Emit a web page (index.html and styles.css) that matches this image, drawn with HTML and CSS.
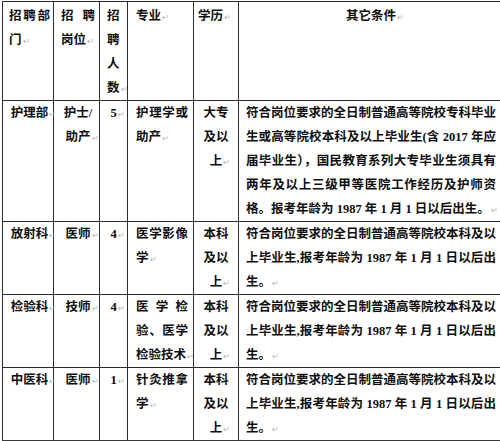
FILE: index.html
```html
<!DOCTYPE html>
<html lang="zh-CN">
<head>
<meta charset="utf-8">
<title>招聘岗位</title>
<link rel="stylesheet" href="styles.css">
</head>
<body>
<div class="page">
<table class="jobs">
<colgroup>
<col class="c1"><col class="c2"><col class="c3"><col class="c4"><col class="c5"><col class="c6">
</colgroup>
<tr class="head">
<td class="k1"><span class="j">招聘部</span>门<span class="pm">↵</span></td>
<td class="k2 left"><span class="j">招聘</span>岗位<span class="pm">↵</span></td>
<td class="k3 left">招<br>聘<br>人<br>数<span class="pm">↵</span></td>
<td class="k4">专业<span class="pm">↵</span></td>
<td class="k5 left">学历<span class="pm">↵</span></td>
<td class="k6 center">其它条件<span class="pm">↵</span></td>
</tr>
<tr>
<td class="k1 center">护理部<span class="pm">↵</span></td>
<td class="k2 center">护士/<br>助产<span class="pm">↵</span></td>
<td class="k3 num">5<span class="pm">↵</span></td>
<td class="k4"><span class="j">护理学或</span>助产<span class="pm">↵</span></td>
<td class="k5 center">大专<br>及以<br>上<span class="pm">↵</span></td>
<td class="k6"><span class="j">符合岗位要求的全日制普通高等院校专科毕业</span><span class="j">生或高等院校本科及以上毕业生(含 2017 年应</span><span class="j">届毕业生），国民教育系列大专毕业生须具有</span><span class="j">两年及以上三级甲等医院工作经历及护师资</span>格。报考年龄为 1987 年 1 月 1 日以后出生。<span class="pm">↵</span></td>
</tr>
<tr>
<td class="k1 center">放射科<span class="pm">↵</span></td>
<td class="k2 center">医师<span class="pm">↵</span></td>
<td class="k3 num">4<span class="pm">↵</span></td>
<td class="k4"><span class="j">医学影像</span>学<span class="pm">↵</span></td>
<td class="k5 center">本科<br>及以<br>上<span class="pm">↵</span></td>
<td class="k6"><span class="j">符合岗位要求的全日制普通高等院校本科及以</span><span class="j">上毕业生,报考年龄为 1987 年 1 月 1 日以后出</span>生。<span class="pm">↵</span></td>
</tr>
<tr>
<td class="k1 center">检验科<span class="pm">↵</span></td>
<td class="k2 center">技师<span class="pm">↵</span></td>
<td class="k3 num">4<span class="pm">↵</span></td>
<td class="k4"><span class="j">医学检</span><span class="j">验、医学</span>检验技术<span class="pm">↵</span></td>
<td class="k5 center">本科<br>及以<br>上<span class="pm">↵</span></td>
<td class="k6"><span class="j">符合岗位要求的全日制普通高等院校本科及以</span><span class="j">上毕业生,报考年龄为 1987 年 1 月 1 日以后出</span>生。<span class="pm">↵</span></td>
</tr>
<tr class="last">
<td class="k1 center">中医科<span class="pm">↵</span></td>
<td class="k2 center">医师<span class="pm">↵</span></td>
<td class="k3 num">1<span class="pm">↵</span></td>
<td class="k4"><span class="j">针灸推拿</span>学<span class="pm">↵</span></td>
<td class="k5 center">本科<br>及以<br>上<span class="pm">↵</span></td>
<td class="k6"><span class="j">符合岗位要求的全日制普通高等院校本科及以</span><span class="j">上毕业生,报考年龄为 1987 年 1 月 1 日以后出</span>生。<span class="pm">↵</span></td>
</tr>
</table>
</div>
</body>
</html>
```

FILE: styles.css
```css
html, body {
  margin: 0;
  padding: 0;
  background: #ffffff;
}

.page {
  padding: 1px 0 0 2px;
}

.jobs {
  border-collapse: collapse;
  table-layout: fixed;
  width: 498px;
  font-family: "Liberation Serif", "Noto Sans CJK SC", serif;
  font-size: 12.5px;
  font-weight: 700;
  color: #0e0e0e;
  line-height: 24px;
}

.c1 { width: 51px; }
.c2 { width: 46px; }
.c3 { width: 28px; }
.c4 { width: 66px; }
.c5 { width: 45px; }
.c6 { width: 262px; }

.jobs td {
  border: 1px solid #2c2c2c;
  vertical-align: top;
  padding: 0;
  text-align: left;
  overflow: visible;
}

.jobs .head td {
  padding-top: 2px;
}

.jobs td.k6 {
  border-right-color: #6a6a6a;
}

.jobs .last td {
  border-bottom-color: #3a3a3a;
}

.k1 { padding-left: 6px !important; padding-right: 3px !important; }
.k2 { padding-left: 7px !important; padding-right: 4px !important; }
.k3 { padding-left: 7px !important; padding-right: 3px !important; }
.k4 { padding-left: 8px !important; padding-right: 5px !important; }
.k5 { padding-left: 4px !important; padding-right: 4px !important; }
.k6 { padding-left: 7px !important; padding-right: 4px !important; }

.jobs td.k3.num {
  padding-left: 4px !important;
  padding-right: 4px !important;
  text-align: center;
}

.jobs td.center { text-align: center; }
.jobs td.left { text-align: left; }

.j {
  display: block;
  white-space: nowrap;
  text-align: justify;
  text-align-last: justify;
}

.pm {
  display: inline-block;
  width: 0;
  white-space: nowrap;
  font-size: 8px;
  line-height: 10px;
  font-weight: 400;
  color: #b4b4b4;
  text-indent: 1px;
}
```
